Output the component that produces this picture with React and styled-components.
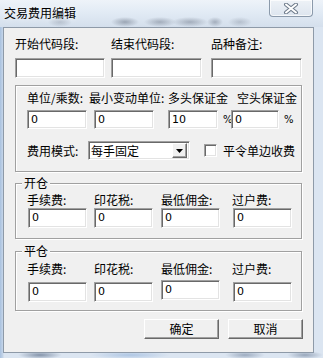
import React from "react";
import styled, { createGlobalStyle } from "styled-components";

const Global = createGlobalStyle`
  html, body { margin: 0; padding: 0; }
  body {
    width: 323px; height: 358px; overflow: hidden;
    font-family: "Noto Sans CJK SC", "Liberation Sans", sans-serif;
    font-size: 12px; color: #000;
  }
`;

const Win = styled.div`
  width: 323px;
  height: 358px;
  display: flex;
  flex-direction: column;
  background:
    radial-gradient(ellipse 22px 4px at 40px 355px, rgba(60,80,110,0.55), transparent),
    radial-gradient(ellipse 40px 4px at 130px 355px, rgba(120,160,210,0.45), transparent),
    radial-gradient(ellipse 20px 4px at 245px 355px, rgba(80,100,130,0.45), transparent),
    radial-gradient(ellipse 18px 4px at 305px 355px, rgba(70,90,120,0.45), transparent),
    linear-gradient(to right, #a9c1de 0px, #c6d6ea 3px, #dbe5f1 4px);
`;

const TitleBar = styled.div`
  height: 27px;
  flex: none;
  display: flex;
  align-items: flex-start;
  justify-content: space-between;
  padding: 0 10px 0 4px;
  background:
    radial-gradient(ellipse 14px 5px at 125px 22px, rgba(40,50,70,0.35), transparent),
    radial-gradient(ellipse 16px 5px at 160px 22px, rgba(40,50,70,0.3), transparent),
    radial-gradient(ellipse 18px 5px at 190px 22px, rgba(40,50,70,0.3), transparent),
    radial-gradient(ellipse 8px 5px at 215px 22px, rgba(40,50,70,0.3), transparent),
    radial-gradient(ellipse 12px 5px at 240px 22px, rgba(40,50,70,0.2), transparent),
    radial-gradient(ellipse 12px 5px at 60px 22px, rgba(40,50,70,0.2), transparent),
    linear-gradient(#eef3f9 0px, #e2ebf5 12px, #d4dfec 27px);
`;

const Title = styled.div`
  margin-top: 6px;
  line-height: 14px;
  font-size: 12px;
  color: #000;
  text-shadow: 0 0 6px rgba(255,255,255,0.9);
`;

const CloseBtn = styled.div`
  width: 44px;
  height: 17px;
  box-sizing: border-box;
  border: 1px solid #8b9aab;
  border-top: none;
  border-radius: 0 0 4px 4px;
  background: linear-gradient(#eef2f7, #dde5ef);
  box-shadow: inset 0 0 0 1px rgba(255,255,255,0.7);
  display: flex;
  align-items: center;
  justify-content: center;
`;

const Client = styled.div`
  flex: 1;
  margin: 0 9px 5px 3px;
  border: 1px solid #8e9aa8;
  background: #f0f0f0;
  padding: 9px 0 0 11px;
  display: flex;
  flex-direction: column;
`;

const Label = styled.div`
  line-height: 14px;
  height: 14px;
  white-space: nowrap;
  font-size: 12px;
  width: ${(p) => (p.$w ? `${p.$w}px` : "auto")};
  flex: none;
`;

const TopGrid = styled.div`
  display: grid;
  grid-template-columns: 96px 100px 91px;
  row-gap: 7px;
`;

const Input = styled.div`
  box-sizing: border-box;
  width: ${(p) => p.$w}px;
  height: ${(p) => p.$h || 20}px;
  background: #fff;
  border: 1px solid;
  border-color: #a0a0a0 #fff #fff #a0a0a0;
  box-shadow: inset 1px 1px 0 #696969, inset -1px -1px 0 #e3e3e3;
  padding: 2px 0 0 3px;
  font-family: "DejaVu Sans", "Liberation Sans", sans-serif;
  font-size: 11px;
  line-height: 13px;
  flex: none;
  margin-top: ${(p) => p.$mt || 0}px;
  margin-left: ${(p) => p.$ml || 0}px;
`;

const Group = styled.div`
  position: relative;
  width: 287px;
  height: ${(p) => p.$h}px;
  box-sizing: border-box;
  border: 1px solid #a0a0a0;
  box-shadow: inset 1px 1px 0 #fff, 1px 1px 0 #fff;
  margin-top: ${(p) => p.$mt}px;
  padding: ${(p) => p.$pad};
`;

const Legend = styled.div`
  position: absolute;
  top: -7px;
  left: 6px;
  padding: 0 2px;
  background: #f0f0f0;
  line-height: 12px;
  height: 12px;
  font-size: 12px;
`;

const Row = styled.div`
  display: flex;
  align-items: ${(p) => p.$align || "flex-start"};
  margin-top: ${(p) => p.$mt || 0}px;
`;

const Pct = styled.span`
  font-family: "DejaVu Sans", "Liberation Sans", sans-serif;
  font-size: 10px;
  width: 13px;
  padding-left: 5px;
  box-sizing: border-box;
  flex: none;
`;

const Gap = styled.div`
  width: ${(p) => p.$w}px;
  flex: none;
`;

const Select = styled.div`
  box-sizing: border-box;
  width: 102px;
  height: 19px;
  background: #fff;
  border: 1px solid;
  border-color: #a0a0a0 #fff #fff #a0a0a0;
  box-shadow: inset 1px 1px 0 #696969, inset -1px -1px 0 #e3e3e3;
  display: flex;
  align-items: center;
  padding: 1px 2px 1px 2px;
  font-size: 12px;
  flex: none;
`;

const SelText = styled.span`
  flex: 1;
  line-height: 14px;
`;

const DropBtn = styled.div`
  width: 15px;
  height: 15px;
  box-sizing: border-box;
  background: #f0f0f0;
  border: 1px solid;
  border-color: #fff #696969 #696969 #fff;
  box-shadow: inset -1px -1px 0 #a0a0a0;
  display: flex;
  align-items: center;
  justify-content: center;
`;

const Check = styled.div`
  width: 13px;
  height: 13px;
  box-sizing: border-box;
  background: #fff;
  border: 1px solid;
  border-color: #a0a0a0 #fff #fff #a0a0a0;
  box-shadow: inset 1px 1px 0 #696969, inset -1px -1px 0 #e3e3e3;
  flex: none;
  margin-right: 6px;
`;

const FeeGrid = styled.div`
  display: grid;
  grid-template-columns: 67px 67px 71px 60px;
  row-gap: ${(p) => p.$gap}px;
`;

const ButtonRow = styled.div`
  display: flex;
  gap: 9px;
  margin: 8px 0 0 129px;
`;

const Button = styled.div`
  box-sizing: border-box;
  width: 75px;
  height: 20px;
  background: #f0f0f0;
  border: 1px solid;
  border-color: #fff #696969 #696969 #fff;
  box-shadow: inset -1px -1px 0 #a0a0a0;
  display: flex;
  align-items: center;
  justify-content: center;
  font-size: 12px;
  line-height: 14px;
`;

const feeLabels = ["手续费:", "印花税:", "最低佣金:", "过户费:"];

function FeeGroup({ title, mt, h, labelTop, gap, offsets }) {
  return (
    <Group $mt={mt} $h={h} $pad={`${labelTop}px 0 0 11px`}>
      <Legend>{title}</Legend>
      <FeeGrid $gap={gap}>
        {feeLabels.map((l) => (
          <Label key={l}>{l}</Label>
        ))}
        {feeLabels.map((l, i) => (
          <Input
            key={"i" + l}
            $w={59}
            $mt={offsets ? offsets[i] : 0}
            $ml={i === 0 || i === 3 ? 1 : 0}
          >
            0
          </Input>
        ))}
      </FeeGrid>
    </Group>
  );
}

export default function App() {
  return (
    <>
      <Global />
      <Win>
        <TitleBar>
          <Title>交易费用编辑</Title>
          <CloseBtn>
            <svg width="16" height="11" viewBox="0 0 16 11">
              <path
                d="M3 1.5 L13 9.5 M13 1.5 L3 9.5"
                stroke="#6d7a8a"
                strokeWidth="4"
                strokeLinecap="round"
                fill="none"
              />
              <path
                d="M3 1.5 L13 9.5 M13 1.5 L3 9.5"
                stroke="#ffffff"
                strokeWidth="2"
                strokeLinecap="round"
                fill="none"
              />
            </svg>
          </CloseBtn>
        </TitleBar>
        <Client>
          <TopGrid>
            <Label>开始代码段:</Label>
            <Label>结束代码段:</Label>
            <Label>品种备注:</Label>
            <Input $w={90} />
            <Input $w={91} />
            <Input $w={91} />
          </TopGrid>

          <Group $mt={7} $h={87} $pad="5px 0 0 11px">
            <Row>
              <Label $w={62}>单位/乘数:</Label>
              <Label $w={79}>最小变动单位:</Label>
              <Label $w={69}>多头保证金</Label>
              <Label>空头保证金</Label>
            </Row>
            <Row $mt={5} $align="center">
              <Input $w={60} $h={19}>0</Input>
              <Gap $w={7} />
              <Input $w={60} $h={19}>0</Input>
              <Gap $w={14} />
              <Input $w={50} $h={19}>10</Input>
              <Pct>%</Pct>
              <Input $w={48} $h={19}>0</Input>
              <Pct>%</Pct>
            </Row>
            <Row $mt={12} $align="center">
              <Label $w={61}>费用模式:</Label>
              <Select>
                <SelText>每手固定</SelText>
                <DropBtn>
                  <svg width="7" height="4" viewBox="0 0 7 4">
                    <path d="M0 0 H7 L3.5 4 Z" fill="#000" />
                  </svg>
                </DropBtn>
              </Select>
              <Gap $w={14} />
              <Check />
              <Label>平令单边收费</Label>
            </Row>
          </Group>

          <FeeGroup title="开仓" mt={11} h={56} labelTop={9} gap={1} />
          <FeeGroup title="平仓" mt={12} h={60} labelTop={10} gap={6} offsets={[0, 0, -2, 0]} />

          <ButtonRow>
            <Button>确定</Button>
            <Button>取消</Button>
          </ButtonRow>
        </Client>
      </Win>
    </>
  );
}
